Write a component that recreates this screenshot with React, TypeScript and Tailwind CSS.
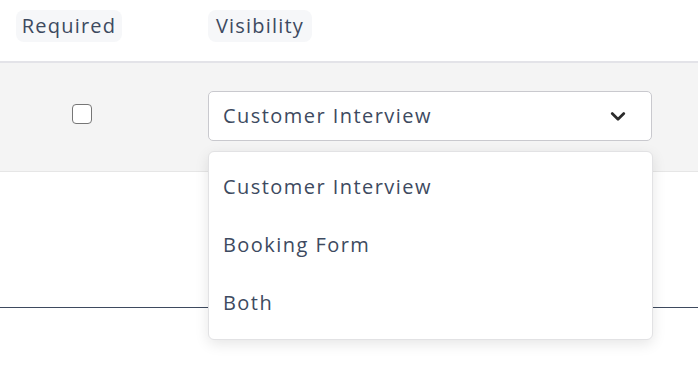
import React from "react";

export default function App() {
  const font = { fontFamily: "'Open Sans', 'Noto Sans', sans-serif" };
  return (
    <div
      className="relative w-[698px] h-[382px] overflow-hidden bg-white text-[#3d4a60]"
      style={font}
    >
      <div className="flex h-[61px] items-start pt-[10px]">
        <div className="ml-[16px] flex h-[32px] w-[106px] items-center justify-center rounded-[8px] bg-[#f6f7f9] text-[20px] tracking-[1.2px]">
          Required
        </div>
        <div className="ml-[86px] flex h-[32px] w-[104px] items-center justify-center rounded-[8px] bg-[#f6f7f9] text-[20px] tracking-[1.2px]">
          Visibility
        </div>
      </div>
      <div className="h-[2px] bg-[#e3e3e8]" />
      <div className="flex h-[109px] items-start border-b border-[#e6e6e6] bg-[#f4f4f4] pt-[28px]">
        <div className="flex w-[208px] justify-center pt-[13px]">
          <div className="ml-[-44px] h-[20px] w-[20px] rounded-[4px] border-[1.5px] border-[#767676] bg-white" />
        </div>
        <div className="flex h-[50px] w-[444px] items-center justify-between rounded-[5px] border border-[#c9c9ce] bg-white pl-[14px] pr-[25px]">
          <span className="text-[20px] tracking-[1.45px]">Customer Interview</span>
          <svg width="16" height="11" viewBox="0 0 16 11">
            <path d="M2.2 2.6 L8 8.2 L13.8 2.6" fill="none" stroke="#2b2b2b" strokeWidth="2.8" strokeLinecap="round" strokeLinejoin="round" />
          </svg>
        </div>
      </div>
      <div className="mt-[135px] h-[1px] bg-[#3e4a5f]" />

      <div className="absolute left-[208px] top-[151px] flex h-[189px] w-[445px] flex-col rounded-[6px] border border-[#e2e2e4] bg-white pt-[6px] shadow-[0_4px_14px_rgba(0,0,0,0.10)]">
        <div className="flex h-[58px] items-center px-[14px] text-[20px] tracking-[1.45px]">Customer Interview</div>
        <div className="flex h-[58px] items-center px-[14px] text-[20px] tracking-[1.45px]">Booking Form</div>
        <div className="flex h-[58px] items-center px-[14px] text-[20px] tracking-[1.45px]">Both</div>
      </div>
    </div>
  );
}
